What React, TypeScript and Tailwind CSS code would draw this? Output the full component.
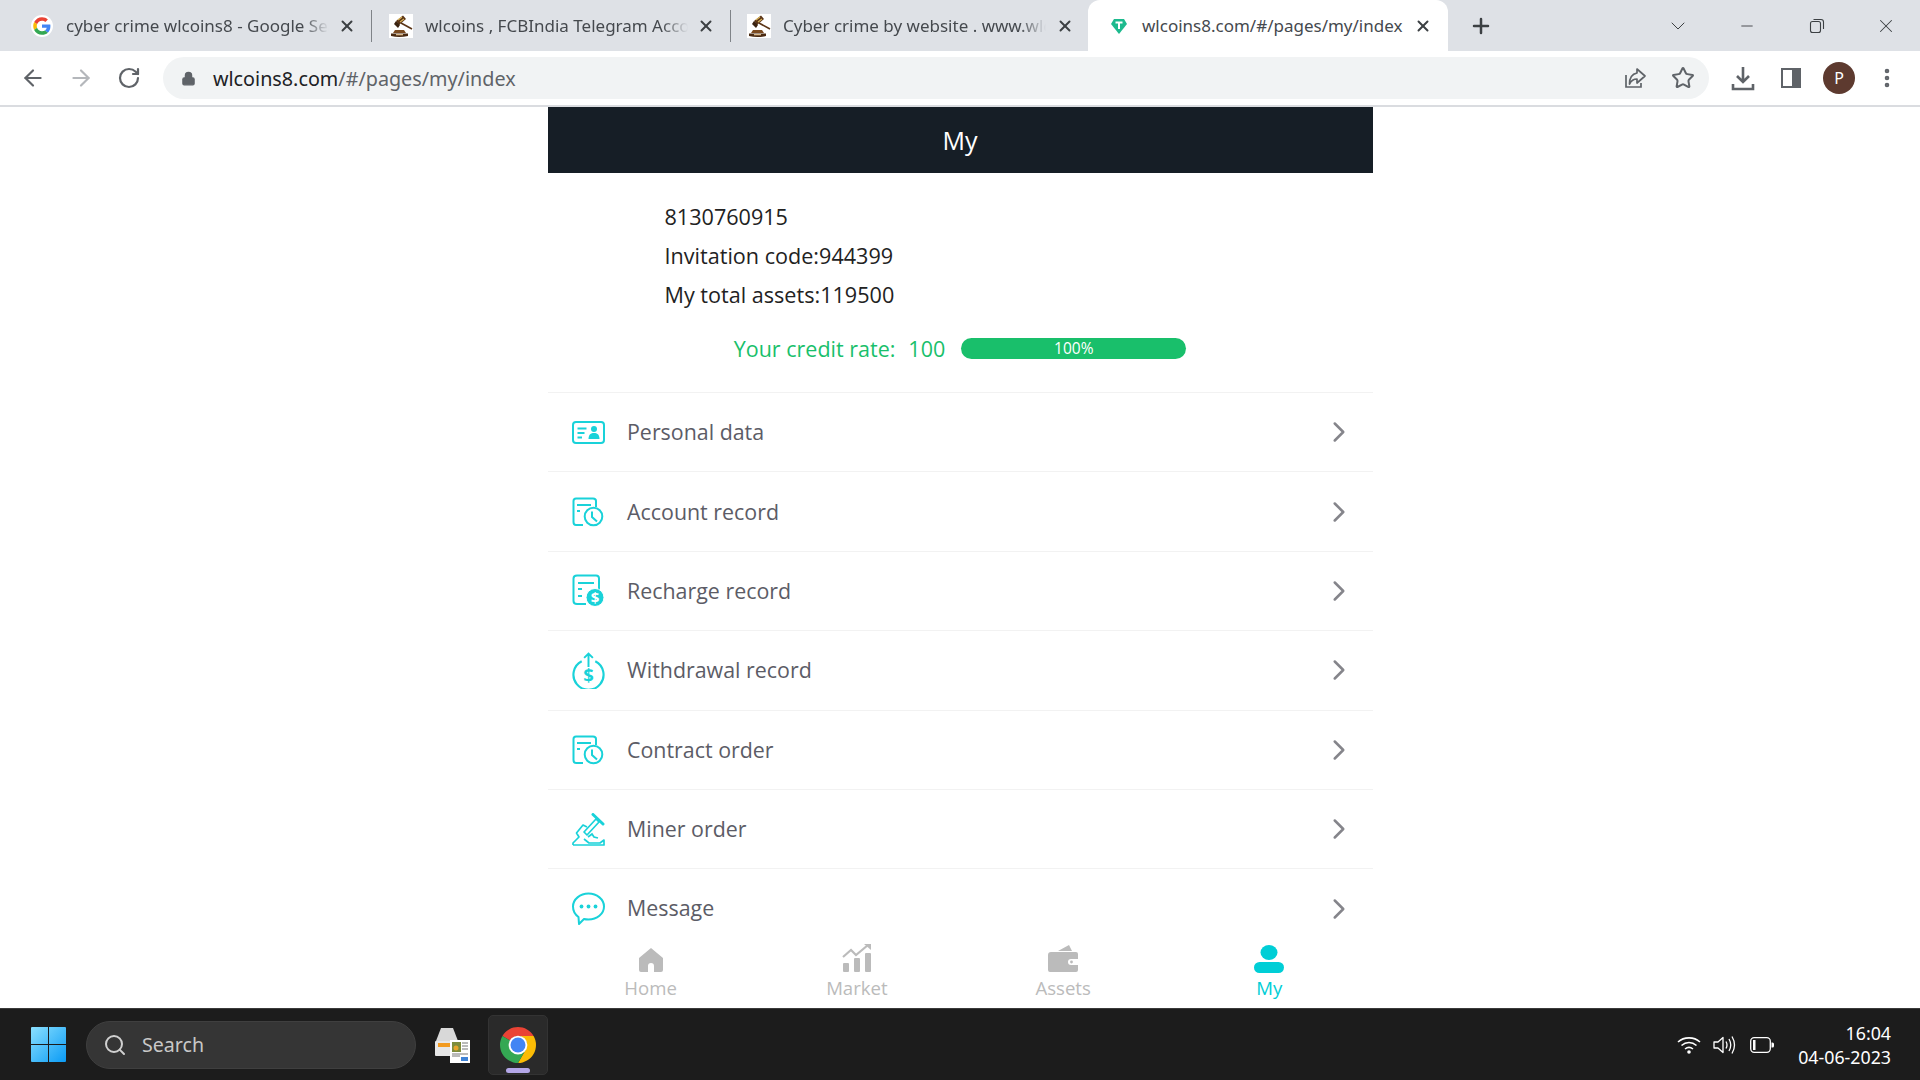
import { ArrowLeft, ArrowRight, RotateCw, Star, Lock, X, Plus, ChevronDown, Minus, EllipsisVertical, Search, ChevronRight } from 'lucide-react';

const TEAL = '#19d2d9';

function GoogleIcon() {
  return (
    <svg width="22" height="22" viewBox="-6 -6 60 60" className="rounded-full bg-white">
      <path fill="#EA4335" d="M24 9.5c3.54 0 6.71 1.22 9.21 3.6l6.85-6.85C35.9 2.38 30.47 0 24 0 14.62 0 6.51 5.38 2.56 13.22l7.98 6.19C12.43 13.72 17.74 9.5 24 9.5z" />
      <path fill="#4285F4" d="M46.98 24.55c0-1.57-.15-3.09-.38-4.55H24v9.02h12.94c-.58 2.96-2.26 5.48-4.78 7.18l7.73 6c4.51-4.18 7.09-10.36 7.09-17.65z" />
      <path fill="#FBBC05" d="M10.53 28.59c-.48-1.45-.76-2.99-.76-4.59s.27-3.14.76-4.59l-7.98-6.19C.92 16.46 0 20.12 0 24c0 3.88.92 7.54 2.56 10.78l7.97-6.19z" />
      <path fill="#34A853" d="M24 48c6.48 0 11.93-2.13 15.89-5.81l-7.73-6c-2.15 1.45-4.92 2.3-8.16 2.3-6.26 0-11.57-4.22-13.47-9.91l-7.98 6.19C6.51 42.62 14.62 48 24 48z" />
    </svg>
  );
}

function GavelIcon() {
  return (
    <svg width="24" height="24" viewBox="0 0 24 24" className="bg-white">
      <path d="M12 9 L23 15" stroke="#5a3416" strokeWidth="1.6" />
      <path d="M7 7 L14 1.5 L17 5 L10 11 Z" fill="#5a3416" />
      <path d="M9 6 L13 3 M11 8 L15 5" stroke="#d9b45a" strokeWidth="1.2" />
      <path d="M5 10 L7 7 L11 11 L9 14 Z" fill="#3a2210" />
      <path d="M6 16 H15 L17 19 H4 Z" fill="#7a4a20" />
      <path d="M2 19.5 H19 V22 Q10 24 2 22 Z" fill="#4a2a12" />
      <rect x="7" y="20" width="7" height="1.3" fill="#d9b98c" />
    </svg>
  );
}

function TetherIcon() {
  return (
    <svg width="18" height="18" viewBox="0 0 18 18">
      <path d="M4 2 H14 L17 7 L9 17 L1 7 Z" fill="#1dba8e" />
      <path d="M5.5 5.5 H12.5 M9 5.5 V12" stroke="#fff" strokeWidth="2" fill="none" />
    </svg>
  );
}

function ShareIcon() {
  return (
    <svg width="24" height="24" viewBox="0 0 24 24" fill="none" stroke="#5f6368" strokeWidth="1.7">
      <path d="M3 9 V21 H18 V17" />
      <path d="M14 3 L22 10 L14 17 V13 C10 13 8 15 6.5 18 C6.5 12 9 8 14 7 Z" strokeLinejoin="round" />
    </svg>
  );
}

function DownloadIcon() {
  return (
    <svg width="26" height="26" viewBox="0 0 26 26" fill="none" stroke="#5f6368" strokeWidth="2.6">
      <path d="M13 2 V16 M7 11 L13 17 L19 11" />
      <path d="M3 19 V24 H23 V19" />
    </svg>
  );
}

function SidebarIcon() {
  return (
    <svg width="20" height="20" viewBox="0 0 20 20" fill="none">
      <rect x="1" y="1" width="18" height="18" stroke="#5f6368" strokeWidth="2" />
      <rect x="11" y="1" width="8" height="18" fill="#5f6368" />
    </svg>
  );
}

function RestoreIcon() {
  return (
    <svg width="16" height="16" viewBox="0 0 16 16" fill="none" stroke="#3c4043" strokeWidth="1.1">
      <rect x="1.5" y="3.5" width="10" height="11" rx="2" />
      <path d="M4.5 1.5 H12 Q14.5 1.5 14.5 4 V11" />
    </svg>
  );
}

function IdIcon() {
  return (
    <svg width="33" height="23" viewBox="0 0 33 23" fill="none">
      <rect x="1" y="1" width="31" height="21" rx="3" stroke={TEAL} strokeWidth="2" />
      <path d="M5.5 7.5 H14.5 M5.5 12 H12.5 M5.5 16.5 H10" stroke={TEAL} strokeWidth="2.2" />
      <circle cx="22" cy="8" r="3" fill={TEAL} />
      <path d="M16.5 18 C16.5 13.5 19 12 22 12 C25 12 27.5 13.5 27.5 18 Z" fill={TEAL} />
    </svg>
  );
}

function ClockDocIcon() {
  return (
    <svg width="32" height="30" viewBox="0 0 32 30" fill="none" stroke={TEAL} strokeWidth="2">
      <path d="M11 28 H4 Q1.5 28 1.5 25 V4 Q1.5 1.5 4 1.5 H21 Q24 1.5 24 4 V10" />
      <path d="M5 8 H19 M5 14 H8" strokeWidth="2.2" />
      <circle cx="21.5" cy="19.5" r="8.8" />
      <path d="M20 14.5 V20 L25 24.5" />
    </svg>
  );
}

function RechargeIcon() {
  return (
    <svg width="33" height="33" viewBox="0 0 33 33" fill="none" stroke={TEAL} strokeWidth="2">
      <path d="M14 30 H5 Q1.5 30 1.5 27 V4.5 Q1.5 1.5 5 1.5 H24 Q27 1.5 27 4.5 V16" />
      <path d="M6 9 H22 M6 15 H10 M6 22 H10" strokeWidth="2.2" />
      <circle cx="23" cy="23.5" r="9" fill={TEAL} stroke="#fff" strokeWidth="1" />
      <text x="23" y="29" textAnchor="middle" fontSize="15" fontWeight="700" fontFamily="Open Sans, sans-serif" fill="#fff" stroke="none">$</text>
    </svg>
  );
}

function WithdrawIcon() {
  return (
    <svg width="34" height="38" viewBox="0 0 34 38" fill="none" stroke={TEAL} strokeWidth="2">
      <path d="M10 10 A15.5 15.5 0 1 0 24 10" strokeWidth="2.2" />
      <path d="M17 16 V2 M12.5 6.5 L17 2 L21.5 6.5" strokeWidth="2" />
      <text x="17" y="31" textAnchor="middle" fontSize="19" fontWeight="700" fontFamily="Open Sans, sans-serif" fill={TEAL} stroke="none">$</text>
    </svg>
  );
}

function MinerIcon() {
  return (
    <svg width="33" height="33" viewBox="0 0 33 33" fill="none" stroke={TEAL} strokeWidth="1.7">
      <path d="M1 32 V30 L7 24 L4.5 20 L11 12 L15 14 M1 32 H32 V27 L28 30 H17 L12 26" strokeLinejoin="round" />
      <path d="M12 19 L24 6 L27 9 L15 22 Z" strokeLinejoin="round" />
      <path d="M21 1.5 L31 11" strokeWidth="3" strokeLinecap="round" />
      <path d="M16 24 L20 21 L22 24 L26 25" />
    </svg>
  );
}

function MessageIcon() {
  return (
    <svg width="33" height="33" viewBox="0 0 33 33" fill="none" stroke={TEAL} strokeWidth="2">
      <path d="M16.5 1.5 C25 1.5 32 7.5 32 14.5 C32 22 25 27.5 16.5 27.5 C14.5 27.5 13 27.3 12 27 L7 32 L6.5 25 C3 22.5 1 18.5 1 14.5 C1 7.5 8 1.5 16.5 1.5 Z" strokeLinejoin="round" />
      <circle cx="9.5" cy="14.5" r="1.9" fill={TEAL} stroke="none" />
      <circle cx="16.5" cy="14.5" r="1.9" fill={TEAL} stroke="none" />
      <circle cx="23.5" cy="14.5" r="1.9" fill={TEAL} stroke="none" />
    </svg>
  );
}

function HomeIcon() {
  return (
    <svg width="26" height="26" viewBox="0 0 26 26">
      <path fillRule="evenodd" fill="#bbbbbb" d="M13 1 L25 11 V23 Q25 25 23 25 H16 V19 Q16 16 13 16 Q10 16 10 19 V25 H3 Q1 25 1 23 V11 Z" />
    </svg>
  );
}

function MarketIcon() {
  return (
    <svg width="30" height="30" viewBox="0 0 30 30" fill="none">
      <rect x="1" y="20" width="6" height="9" rx="1" fill="#bbbbbb" />
      <rect x="12" y="15" width="6" height="14" rx="1" fill="#bbbbbb" />
      <rect x="23" y="10" width="6" height="19" rx="1" fill="#bbbbbb" />
      <path d="M1 14 L9 7 L14 12 L26 2" stroke="#bbbbbb" strokeWidth="2.2" />
      <path d="M22 1 H29 V7 Z" fill="#bbbbbb" />
    </svg>
  );
}

function WalletIcon() {
  return (
    <svg width="30" height="28" viewBox="0 0 30 28">
      <path fill="#bbbbbb" d="M10 6 L21 0 L24 6 Z" />
      <path fill="#bbbbbb" fillRule="evenodd" d="M3 7 H28 Q30 7 30 9 V14 H23 Q20 14 20 17 Q20 20 23 20 H30 V25 Q30 27 28 27 H2 Q0 27 0 25 V10 Q0 7 3 7 Z" />
      <circle cx="23.5" cy="17" r="1.4" fill="#bbbbbb" />
    </svg>
  );
}

function PersonIcon() {
  return (
    <svg width="30" height="28" viewBox="0 0 30 28" fill="#00ced6">
      <ellipse cx="15" cy="7.5" rx="8.5" ry="7.5" />
      <rect x="0" y="17" width="30" height="11" rx="5.5" />
    </svg>
  );
}

function WindowsLogo() {
  return (
    <svg width="35" height="35" viewBox="0 0 35 35">
      <defs>
        <linearGradient id="win" x1="0" y1="0" x2="1" y2="1">
          <stop offset="0" stopColor="#8be0ff" />
          <stop offset="1" stopColor="#0a9bf5" />
        </linearGradient>
      </defs>
      <path fill="url(#win)" d="M0 1 Q0 0 1 0 H17 V17 H0 Z M18 0 H34 Q35 0 35 1 V17 H18 Z M0 18 H17 V35 H1 Q0 35 0 34 Z M18 18 H35 V34 Q35 35 34 35 H18 Z" />
    </svg>
  );
}

function ScannerIcon() {
  return (
    <svg width="36" height="36" viewBox="0 0 36 36">
      <path d="M7 1 H19 L24 14 H2 Z" fill="#d8d8d8" />
      <rect x="1" y="14" width="24" height="15" rx="1" fill="#e6e6e6" />
      <rect x="4" y="16" width="14" height="4" fill="#f29a1f" />
      <rect x="16" y="13" width="20" height="23" fill="#fff" />
      <rect x="18" y="15" width="9" height="10" fill="#7d8c3a" />
      <circle cx="22" cy="21" r="2.5" fill="#e5a52a" />
      <path d="M28 16 H34 M28 19 H34 M28 22 H34 M18 27 H34 M18 29 H26" stroke="#777" strokeWidth="1" />
      <rect x="27" y="30" width="7" height="4" fill="#3f83d6" />
    </svg>
  );
}

function ChromeIcon() {
  return (
    <svg width="36" height="36" viewBox="0 0 48 48">
      <path fill="#EA4335" d="M3.22 12 A24 24 0 0 1 44.78 12 L24 12 A12 12 0 0 0 13.61 18 Z" />
      <path fill="#FBBC05" d="M44.78 12 A24 24 0 0 1 24 48 L34.39 30 A12 12 0 0 0 24 12 Z" />
      <path fill="#34A853" d="M24 48 A24 24 0 0 1 3.22 12 L13.61 18 A12 12 0 0 0 34.39 30 Z" />
      <circle cx="24" cy="24" r="12.5" fill="#fff" />
      <circle cx="24" cy="24" r="10" fill="#4285F4" />
    </svg>
  );
}

function WifiIcon() {
  return (
    <svg width="24" height="20" viewBox="0 0 24 20" fill="none" stroke="#fff" strokeWidth="1.6">
      <path d="M1 7 C7 1.5 17 1.5 23 7" />
      <path d="M4.5 10.5 C9 6.5 15 6.5 19.5 10.5" />
      <path d="M8 14 C10.5 12 13.5 12 16 14" />
      <circle cx="12" cy="17" r="1.8" fill="#fff" stroke="none" />
    </svg>
  );
}

function VolumeIcon() {
  return (
    <svg width="24" height="20" viewBox="0 0 24 20" fill="none" stroke="#fff" strokeWidth="1.3">
      <path d="M1 7 H5 L10 2.5 V17.5 L5 13 H1 Z" strokeLinejoin="round" />
      <path d="M13 6.5 Q15 10 13 13.5 M16 4 Q19.5 10 16 16 M19 1.5 Q24 10 19 18.5" />
    </svg>
  );
}

function BatteryIcon() {
  return (
    <svg width="24" height="16" viewBox="0 0 24 16" fill="none">
      <rect x="0.7" y="0.7" width="19.6" height="14.6" rx="3.5" stroke="#fff" strokeWidth="1.3" />
      <rect x="3" y="3" width="2.5" height="10" fill="#fff" />
      <path d="M21.5 5.5 H22.5 Q24 5.5 24 7 V9 Q24 10.5 22.5 10.5 H21.5 Z" fill="#fff" />
    </svg>
  );
}

const TABS = [
  { title: 'cyber crime wlcoins8 - Google Search', icon: <GoogleIcon />, gap: 'gap-[13px]', pad: 'pl-[18px]' },
  { title: 'wlcoins , FCBIndia Telegram Account', icon: <GavelIcon />, gap: 'gap-[12px]', pad: 'pl-[17px]' },
  { title: 'Cyber crime by website . www.wlcoins8', icon: <GavelIcon />, gap: 'gap-[12px]', pad: 'pl-[16px]' },
];

const MENU = [
  { label: 'Personal data', icon: <IdIcon /> },
  { label: 'Account record', icon: <ClockDocIcon /> },
  { label: 'Recharge record', icon: <RechargeIcon /> },
  { label: 'Withdrawal record', icon: <WithdrawIcon /> },
  { label: 'Contract order', icon: <ClockDocIcon /> },
  { label: 'Miner order', icon: <MinerIcon /> },
  { label: 'Message', icon: <MessageIcon /> },
];

const NAV = [
  { label: 'Home', icon: <HomeIcon />, active: false },
  { label: 'Market', icon: <MarketIcon />, active: false },
  { label: 'Assets', icon: <WalletIcon />, active: false },
  { label: 'My', icon: <PersonIcon />, active: true },
];

export default function App() {
  return (
    <div className="flex h-screen w-[1920px] flex-col overflow-hidden bg-white font-['Open_Sans',sans-serif]">
      {/* tab strip */}
      <div className="flex h-[51px] shrink-0 items-center bg-[#dee1e6] pl-[13px] font-['Noto_Sans',sans-serif] text-[17px] text-[#45494e]">
        {TABS.map((tab) => (
          <div key={tab.title} className={`relative flex h-[51px] w-[359px] items-center ${tab.pad} ${tab.gap}`}>
            {tab.icon}
            <span className="w-[263px] overflow-hidden whitespace-nowrap [mask-image:linear-gradient(to_right,black_90%,transparent)]">
              {tab.title}
            </span>
            <X className="absolute right-[16px] h-[18px] w-[18px] text-[#3c4043]" strokeWidth={2.6} />
            <div className="absolute right-0 h-[32px] w-px bg-[#7f8388]" />
          </div>
        ))}
        <div className="relative -ml-[2px] flex h-[51px] w-[360px] items-center gap-[14px] rounded-t-[12px] bg-white pl-[22px]">
          <TetherIcon />
          <span className="whitespace-nowrap">wlcoins8.com/#/pages/my/index</span>
          <X className="absolute right-[16px] h-[18px] w-[18px] text-[#3c4043]" strokeWidth={2.6} />
        </div>
        <Plus className="ml-[21px] h-[24px] w-[24px] text-[#3c4043]" strokeWidth={2.5} />
        <div className="ml-auto flex items-center text-[#3c4043]">
          <ChevronDown className="mr-[48px] h-[24px] w-[24px]" strokeWidth={1} />
          <Minus className="mr-[53px] h-[18px] w-[18px]" strokeWidth={1.2} />
          <div className="mr-[50px]"><RestoreIcon /></div>
          <X className="mr-[23px] h-[22px] w-[22px]" strokeWidth={1.1} />
        </div>
      </div>

      {/* toolbar */}
      <div className="flex h-[56px] shrink-0 items-center border-b-2 border-[#dadce0] bg-white">
        <ArrowLeft className="ml-[20px] h-[26px] w-[26px] text-[#5f6368]" strokeWidth={2} />
        <ArrowRight className="ml-[22px] h-[26px] w-[26px] text-[#b4b7bb]" strokeWidth={2} />
        <RotateCw className="ml-[23px] h-[24px] w-[24px] text-[#5f6368]" strokeWidth={2.2} />
        <div className="ml-[22px] flex h-[42px] w-[1546px] items-center rounded-full bg-[#f1f3f4] pl-[18px] pr-[14px]">
          <Lock className="h-[15px] w-[15px] fill-[#5f6368] text-[#5f6368]" strokeWidth={2} />
          <span className="ml-[17px] pt-[1px] font-['Noto_Sans',sans-serif] text-[19.75px] text-[#5f6368]">
            <span className="text-[#202124]">wlcoins8.com</span>/#/pages/my/index
          </span>
          <div className="ml-auto flex items-center gap-[24px]">
            <ShareIcon />
            <Star className="h-[24px] w-[24px] text-[#5f6368]" strokeWidth={2} />
          </div>
        </div>
        <div className="ml-[21px]"><DownloadIcon /></div>
        <div className="ml-[25px]"><SidebarIcon /></div>
        <div className="ml-[22px] flex h-[32px] w-[32px] items-center justify-center rounded-full bg-[#5d3a2f] font-['Noto_Sans',sans-serif] text-[16px] text-white">P</div>
        <EllipsisVertical className="ml-[20px] h-[24px] w-[24px] text-[#5f6368]" strokeWidth={2.6} />
      </div>

      {/* page */}
      <div className="relative mx-auto min-h-0 w-[825px] flex-1 overflow-hidden">
        <div className="flex h-[66px] items-center justify-center bg-[#161e26] pt-[1px] text-[25px] text-white">My</div>
        <div className="pl-[117px] pt-[24px] text-[21.6px] leading-[39px] text-[#222222]">
          <div>8130760915</div>
          <div>Invitation code:944399</div>
          <div>My total assets:119500</div>
        </div>
        <div className="mt-[24px] flex h-[21px] items-center justify-center text-[21.5px] text-[#19bf6b]">
          <span className="pt-[1px]">Your credit rate:</span>
          <span className="ml-[13px] pt-[1px]">100</span>
          <div className="ml-[16px] flex h-[21px] w-[225px] items-center justify-center rounded-full bg-[#19bf6b] text-[15.5px] text-white">100%</div>
        </div>
        <div className="mt-[33px]">
          {MENU.map((item) => (
            <div key={item.label} className="flex h-[79.4px] items-center border-t border-[#f2f2f2] pl-[24px] pr-[17px] text-[21.4px] text-[#5c5c66]">
              <div className="flex w-[33px] justify-center">{item.icon}</div>
              <span className="ml-[22.5px]">{item.label}</span>
              <ChevronRight className="ml-auto h-[34px] w-[34px] text-[#85858b]" strokeWidth={1.8} />
            </div>
          ))}
        </div>
        <div className="absolute inset-x-0 bottom-0 grid h-[78px] grid-cols-4 bg-white pt-[13px]">
          {NAV.map((item) => (
            <div key={item.label} className="flex flex-col items-center">
              <div className="flex h-[30px] items-end">{item.icon}</div>
              <span className={`text-[18.6px] leading-[29px] ${item.active ? 'text-[#00ced6]' : 'text-[#bbbbbb]'}`}>{item.label}</span>
            </div>
          ))}
        </div>
      </div>

      {/* taskbar */}
      <div className="flex h-[72px] shrink-0 items-center border-t border-[#3a3a3a] bg-[#1c1c1c]">
        <div className="ml-[31px]"><WindowsLogo /></div>
        <div className="ml-[20px] flex h-[48px] w-[330px] items-center rounded-full border border-[#3f3f3f] bg-[#353535] pl-[16px]">
          <Search className="h-[24px] w-[24px] text-[#d0d0d0]" strokeWidth={2} />
          <span className="ml-[15px] font-['Noto_Sans',sans-serif] text-[19.6px] text-[#c8c8c8]">Search</span>
        </div>
        <div className="ml-[18px]"><ScannerIcon /></div>
        <div className="relative ml-[18px] flex h-[60px] w-[60px] items-center justify-center rounded-[5px] border border-[#333333] bg-[#2a2a2a]">
          <ChromeIcon />
          <div className="absolute bottom-[1px] h-[5px] w-[24px] rounded-full bg-[#b4a7e8]" />
        </div>
        <div className="ml-auto flex items-center">
          <WifiIcon />
          <div className="ml-[12px]"><VolumeIcon /></div>
          <div className="ml-[13px]"><BatteryIcon /></div>
          <div className="ml-[24px] mr-[29px] text-right font-['Noto_Sans',sans-serif] text-[17.8px] leading-[24px] text-white">
            <div>16:04</div>
            <div>04-06-2023</div>
          </div>
        </div>
      </div>
    </div>
  );
}
